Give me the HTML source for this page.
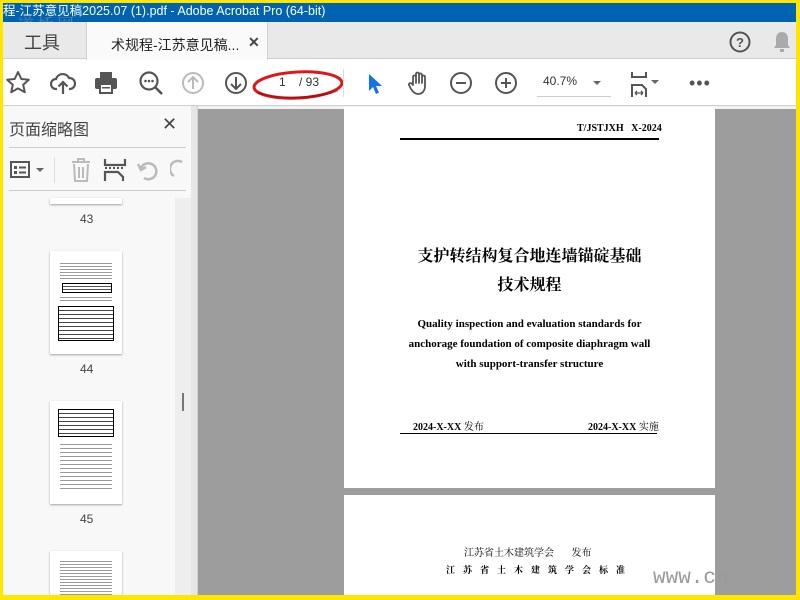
<!DOCTYPE html>
<html><head><meta charset="utf-8"><style>
*{margin:0;padding:0;box-sizing:border-box}
body{width:800px;height:600px;overflow:hidden;background:#ffe600;position:relative;font-family:"Liberation Sans","Noto Sans CJK SC",sans-serif}
.a{position:absolute}
.ic{position:absolute}
.serif{font-family:"Liberation Serif","Noto Serif CJK SC",serif}
</style></head><body>
<div class="a" style="left:3px;top:3px;width:793px;height:592px;background:#fff;overflow:hidden">
 <div class="a" style="left:0;top:0;width:793px;height:19px;background:#0063b1;color:#fff;font-size:12.5px;line-height:17px;white-space:nowrap;padding-left:0">程-江苏意见稿2025.07 (1).pdf - Adobe Acrobat Pro (64-bit)</div>
 <div class="a" style="left:14px;top:8px;font-size:17px;color:rgba(150,150,160,.6);letter-spacing:3px;font-family:'Noto Serif CJK SC',serif">道桥网</div>
 <div class="a" style="left:0;top:19px;width:793px;height:37px;background:#e9e9e9;border-bottom:1px solid #cfcfcf"></div>
 <div class="a" style="left:21px;top:26px;font-size:18px;color:#444">工具</div>
 <div class="a" style="left:83px;top:19px;width:182px;height:38px;background:#fafafa;border-left:1px solid #d0d0d0;border-right:1px solid #d0d0d0"></div>
 <div class="a" style="left:108px;top:32px;font-size:14px;color:#222">术规程-江苏意见稿...</div>
 <div class="a" style="left:245px;top:31px;font-size:14px;color:#444;font-weight:bold">✕</div>
 <svg class="ic" style="left:726px;top:28px" width="22" height="22"><circle cx="11" cy="11" r="9.5" fill="none" stroke="#555" stroke-width="2"/><text x="11" y="16" font-size="13" font-weight="bold" text-anchor="middle" fill="#555" font-family="Liberation Sans">?</text></svg>
 <svg class="ic" style="left:769px;top:27px" width="20" height="24"><path d="M10 2c-4 0-6 3-6 7v6l-2 3h16l-2-3V9c0-4-2-7-6-7z" fill="#aaa"/><rect x="8" y="19" width="4" height="3" fill="#aaa"/></svg>
 <div class="a" style="left:0;top:57px;width:793px;height:46px;background:#fff;border-bottom:1px solid #cfcfcf"></div>
 <svg class="ic" style="left:2px;top:67px" width="26" height="26"><path d="M13 2l3.3 7 7.5.8-5.6 5 1.6 7.4L13 18.4 6.2 22.2l1.6-7.4-5.6-5 7.5-.8z" fill="none" stroke="#555" stroke-width="2" stroke-linejoin="round"/></svg>
 <svg class="ic" style="left:47px;top:67px" width="26" height="26"><path d="M7 19H6a5 5 0 0 1 0-10 7 7 0 0 1 13-1 5 5 0 0 1 1 11h-1" fill="none" stroke="#555" stroke-width="2.2"/><path d="M13 24V12M8.5 16.5 13 12l4.5 4.5" fill="none" stroke="#555" stroke-width="2.2"/></svg>
 <svg class="ic" style="left:90px;top:67px" width="26" height="26"><rect x="7" y="2" width="12" height="6" fill="#555"/><rect x="2" y="8" width="22" height="11" rx="2" fill="#555"/><rect x="7" y="14" width="12" height="9" fill="#fff" stroke="#555" stroke-width="2"/><rect x="9" y="17" width="8" height="1.5" fill="#555"/></svg>
 <svg class="ic" style="left:135px;top:67px" width="26" height="26"><circle cx="11" cy="11" r="8.5" fill="none" stroke="#555" stroke-width="2.2"/><path d="M17 17l7 7" stroke="#555" stroke-width="2.6"/><circle cx="7.5" cy="11" r="1.3" fill="#555"/><circle cx="11" cy="11" r="1.3" fill="#555"/><circle cx="14.5" cy="11" r="1.3" fill="#555"/></svg>
 <svg class="ic" style="left:178px;top:68px" width="24" height="24"><circle cx="12" cy="12" r="10" fill="none" stroke="#bbb" stroke-width="2"/><path d="M12 18V6M7 11l5-5 5 5" fill="none" stroke="#bbb" stroke-width="2"/></svg>
 <svg class="ic" style="left:221px;top:68px" width="24" height="24"><circle cx="12" cy="12" r="10" fill="none" stroke="#555" stroke-width="2"/><path d="M12 6v12M7 13l5 5 5-5" fill="none" stroke="#555" stroke-width="2"/></svg>
 <svg class="ic" style="left:245px;top:66px" width="100" height="36"><ellipse cx="50" cy="16" rx="44" ry="13" fill="none" stroke="#e0161b" stroke-width="3" transform="rotate(-3 50 16)"/><path d="M10 24q40 10 80 -2" stroke="rgba(0,0,0,.25)" stroke-width="2" fill="none"/></svg>
 <div class="a" style="left:276px;top:72px;font-size:12px;color:#333">1</div>
 <div class="a" style="left:296px;top:72px;font-size:12px;color:#333">/ 93</div>
 <div class="a" style="left:340px;top:66px;width:1px;height:28px;background:#ddd"></div>
 <svg class="ic" style="left:363px;top:69px" width="16" height="24"><path d="M3 2v17l4-4 3 7 3-1.5-3-6.5h6z" fill="#1473e6"/></svg>
 <svg class="ic" style="left:403px;top:67px" width="26" height="26"><path d="M7 15V7a1.5 1.5 0 0 1 3 0v6V4a1.5 1.5 0 0 1 3 0v9V5a1.5 1.5 0 0 1 3 0v8V7a1.5 1.5 0 0 1 3 0v9c0 5-3 8-7 8-3 0-5-2-7-5l-2-4a1.5 1.5 0 0 1 2.5-1.5z" fill="none" stroke="#555" stroke-width="1.8" stroke-linejoin="round"/></svg>
 <svg class="ic" style="left:446px;top:68px" width="24" height="24"><circle cx="12" cy="12" r="10" fill="none" stroke="#555" stroke-width="2"/><path d="M7 12h10" stroke="#555" stroke-width="2"/></svg>
 <svg class="ic" style="left:491px;top:68px" width="24" height="24"><circle cx="12" cy="12" r="10" fill="none" stroke="#555" stroke-width="2"/><path d="M7 12h10M12 7v10" stroke="#555" stroke-width="2"/></svg>
 <div class="a" style="left:534px;top:70px;width:74px;height:24px;border-bottom:1px solid #ccc;font-size:12px;color:#333;padding-left:6px;line-height:16px">40.7%</div>
 <div class="a" style="left:590px;top:78px;border-left:4px solid transparent;border-right:4px solid transparent;border-top:4px solid #666"></div>
 <svg class="ic" style="left:627px;top:68px" width="36" height="26"><path d="M2 1v5h14V1M2 26V14h10l4 4v8" fill="none" stroke="#555" stroke-width="2"/><path d="M5 22h8M5 22l2-2M5 22l2 2M13 22l-2-2M13 22l-2 2" stroke="#555" stroke-width="1.3"/><path d="M21 9h8l-4 4z" fill="#666"/></svg>
 <div class="a" style="left:686px;top:70px;font-size:18px;color:#555;letter-spacing:1px">•••</div>
 <div class="a" style="left:0;top:103px;width:188px;height:489px;background:#f8f8f8"></div>
 <div class="a" style="left:6px;top:113px;font-size:16px;color:#444">页面缩略图</div>
 <div class="a" style="left:159px;top:111px;font-size:18px;color:#444">✕</div>
 <div class="a" style="left:6px;top:144px;width:177px;height:1px;background:#ccc"></div>
 <svg class="ic" style="left:6px;top:156px" width="36" height="22"><rect x="2" y="3" width="18" height="15" fill="none" stroke="#555" stroke-width="2"/><rect x="5" y="7" width="3" height="3" fill="#555"/><rect x="5" y="12" width="3" height="3" fill="#555"/><path d="M10 8.5h7M10 13.5h7" stroke="#555" stroke-width="2"/><path d="M27 9h8l-4 4z" fill="#666"/></svg>
 <div class="a" style="left:51px;top:154px;width:1px;height:26px;background:#ddd"></div>
 <svg class="ic" style="left:66px;top:154px" width="24" height="26"><path d="M3 5h18M9 5V2h6v3M5 7l1 17h12l1-17M10 10v11M14 10v11" fill="none" stroke="#bbb" stroke-width="2"/></svg>
 <svg class="ic" style="left:100px;top:154px" width="24" height="26"><path d="M2 2v6h20V2M2 24V15h13l5 5v4" fill="none" stroke="#555" stroke-width="2.2"/><path d="M2 11h20" stroke="#555" stroke-width="2" stroke-dasharray="2 2"/></svg>
 <svg class="ic" style="left:133px;top:155px" width="24" height="24"><path d="M8 20A8 8 0 1 0 5 10" fill="none" stroke="#bbb" stroke-width="2.5"/><path d="M2 6l3 6 5-3" fill="none" stroke="#bbb" stroke-width="2.5"/></svg>
 <svg class="ic" style="left:167px;top:155px" width="16" height="24"><path d="M12 4A8 8 0 0 0 4 18" fill="none" stroke="#bbb" stroke-width="2.5"/></svg>
 <div class="a" style="left:6px;top:187px;width:177px;height:1px;background:#ccc"></div>
 <div class="a" style="left:172px;top:195px;width:16px;height:397px;background:#eee"></div>
 <div class="a" style="left:179px;top:390px;width:2px;height:18px;background:#777"></div>
 <div class="a" style="left:47px;top:195px;width:72px;height:6px;background:#fff;box-shadow:0 1px 2px rgba(0,0,0,.35)"></div>
 <div class="a" style="left:77px;top:209px;font-size:12px;color:#444">43</div>
 <div class="a" style="left:47px;top:248px;width:72px;height:103px;background:#fff;box-shadow:0 1px 2px rgba(0,0,0,.35)">
  <div class="a" style="left:10px;top:10px;width:52px;height:20px;background:repeating-linear-gradient(#fff 0 2px,#999 2px 3px)"></div>
  <div class="a" style="left:12px;top:32px;width:50px;height:10px;border:1px solid #000;background:repeating-linear-gradient(#fff 0 2px,#555 2px 3px)"></div>
  <div class="a" style="left:10px;top:44px;width:52px;height:7px;background:repeating-linear-gradient(#fff 0 2px,#999 2px 3px)"></div>
  <div class="a" style="left:8px;top:55px;width:56px;height:35px;border:1px solid #000;background:repeating-linear-gradient(#fff 0 3px,#444 3px 4px)"></div>
 </div>
 <div class="a" style="left:77px;top:359px;font-size:12px;color:#444">44</div>
 <div class="a" style="left:47px;top:398px;width:72px;height:103px;background:#fff;box-shadow:0 1px 2px rgba(0,0,0,.35)">
  <div class="a" style="left:8px;top:8px;width:56px;height:28px;border:1px solid #000;background:repeating-linear-gradient(#fff 0 3px,#444 3px 4px)"></div>
  <div class="a" style="left:10px;top:40px;width:52px;height:50px;background:repeating-linear-gradient(#fff 0 3px,#999 3px 4px)"></div>
 </div>
 <div class="a" style="left:77px;top:509px;font-size:12px;color:#444">45</div>
 <div class="a" style="left:47px;top:548px;width:72px;height:60px;background:#fff;box-shadow:0 1px 2px rgba(0,0,0,.35)">
  <div class="a" style="left:10px;top:8px;width:52px;height:40px;background:repeating-linear-gradient(#fff 0 2px,#999 2px 3px)"></div>
 </div>
 <div class="a" style="left:188px;top:103px;width:7px;height:489px;background:#e6e6e6;border-right:1px solid #d0d0d0"></div>
 <div class="a" style="left:200px;top:360px;border-top:5px solid transparent;border-bottom:5px solid transparent;border-right:5px solid #666"></div>
 <div class="a" style="left:195px;top:103px;width:598px;height:489px;background:#f2f2f2"></div>
 <div class="a" style="left:195px;top:106px;width:598px;height:486px;background:#9d9d9d"></div>
 <div class="a" style="left:341px;top:104px;width:371px;height:381px;background:#fff"></div>
 <div class="a" style="left:341px;top:492px;width:371px;height:110px;background:#fff"></div>
 <div class="a serif" style="left:574px;top:120px;font-size:10px;font-weight:bold;color:#000">T/JSTJXH&nbsp;&nbsp;&nbsp;X-2024</div>
 <div class="a" style="left:397px;top:135px;width:259px;height:2px;background:#000"></div>
 <div class="a serif" style="left:341px;top:239px;width:371px;text-align:center;font-size:16px;font-weight:bold;color:#000;line-height:29px">支护转结构复合地连墙锚碇基础<br>技术规程</div>
 <div class="a serif" style="left:341px;top:311px;width:371px;text-align:center;font-size:11px;font-weight:bold;color:#000;line-height:20px">Quality inspection and evaluation standards for<br>anchorage foundation of composite diaphragm wall<br>with support-transfer structure</div>
 <div class="a serif" style="left:410px;top:415px;font-size:10px;font-weight:bold;color:#000">2024-X-XX <span style="font-weight:normal">发布</span></div>
 <div class="a serif" style="left:585px;top:415px;font-size:10px;font-weight:bold;color:#000">2024-X-XX <span style="font-weight:normal">实施</span></div>
 <div class="a" style="left:397px;top:430px;width:257px;height:1px;background:#000"></div>
 <div class="a serif" style="left:461px;top:541px;font-size:10px;color:#000">江苏省土木建筑学会&nbsp;&nbsp;&nbsp;&nbsp;&nbsp;&nbsp;&nbsp;发布</div>
 <div class="a serif" style="left:443px;top:560px;font-size:9px;font-weight:bold;color:#000;letter-spacing:8px">江苏省土木建筑学会标准</div>
 <div class="a" style="left:650px;top:564px;font-size:21px;color:#9a9a9a;font-family:'Liberation Mono',monospace">www.cn</div>
</div>
</body></html>
